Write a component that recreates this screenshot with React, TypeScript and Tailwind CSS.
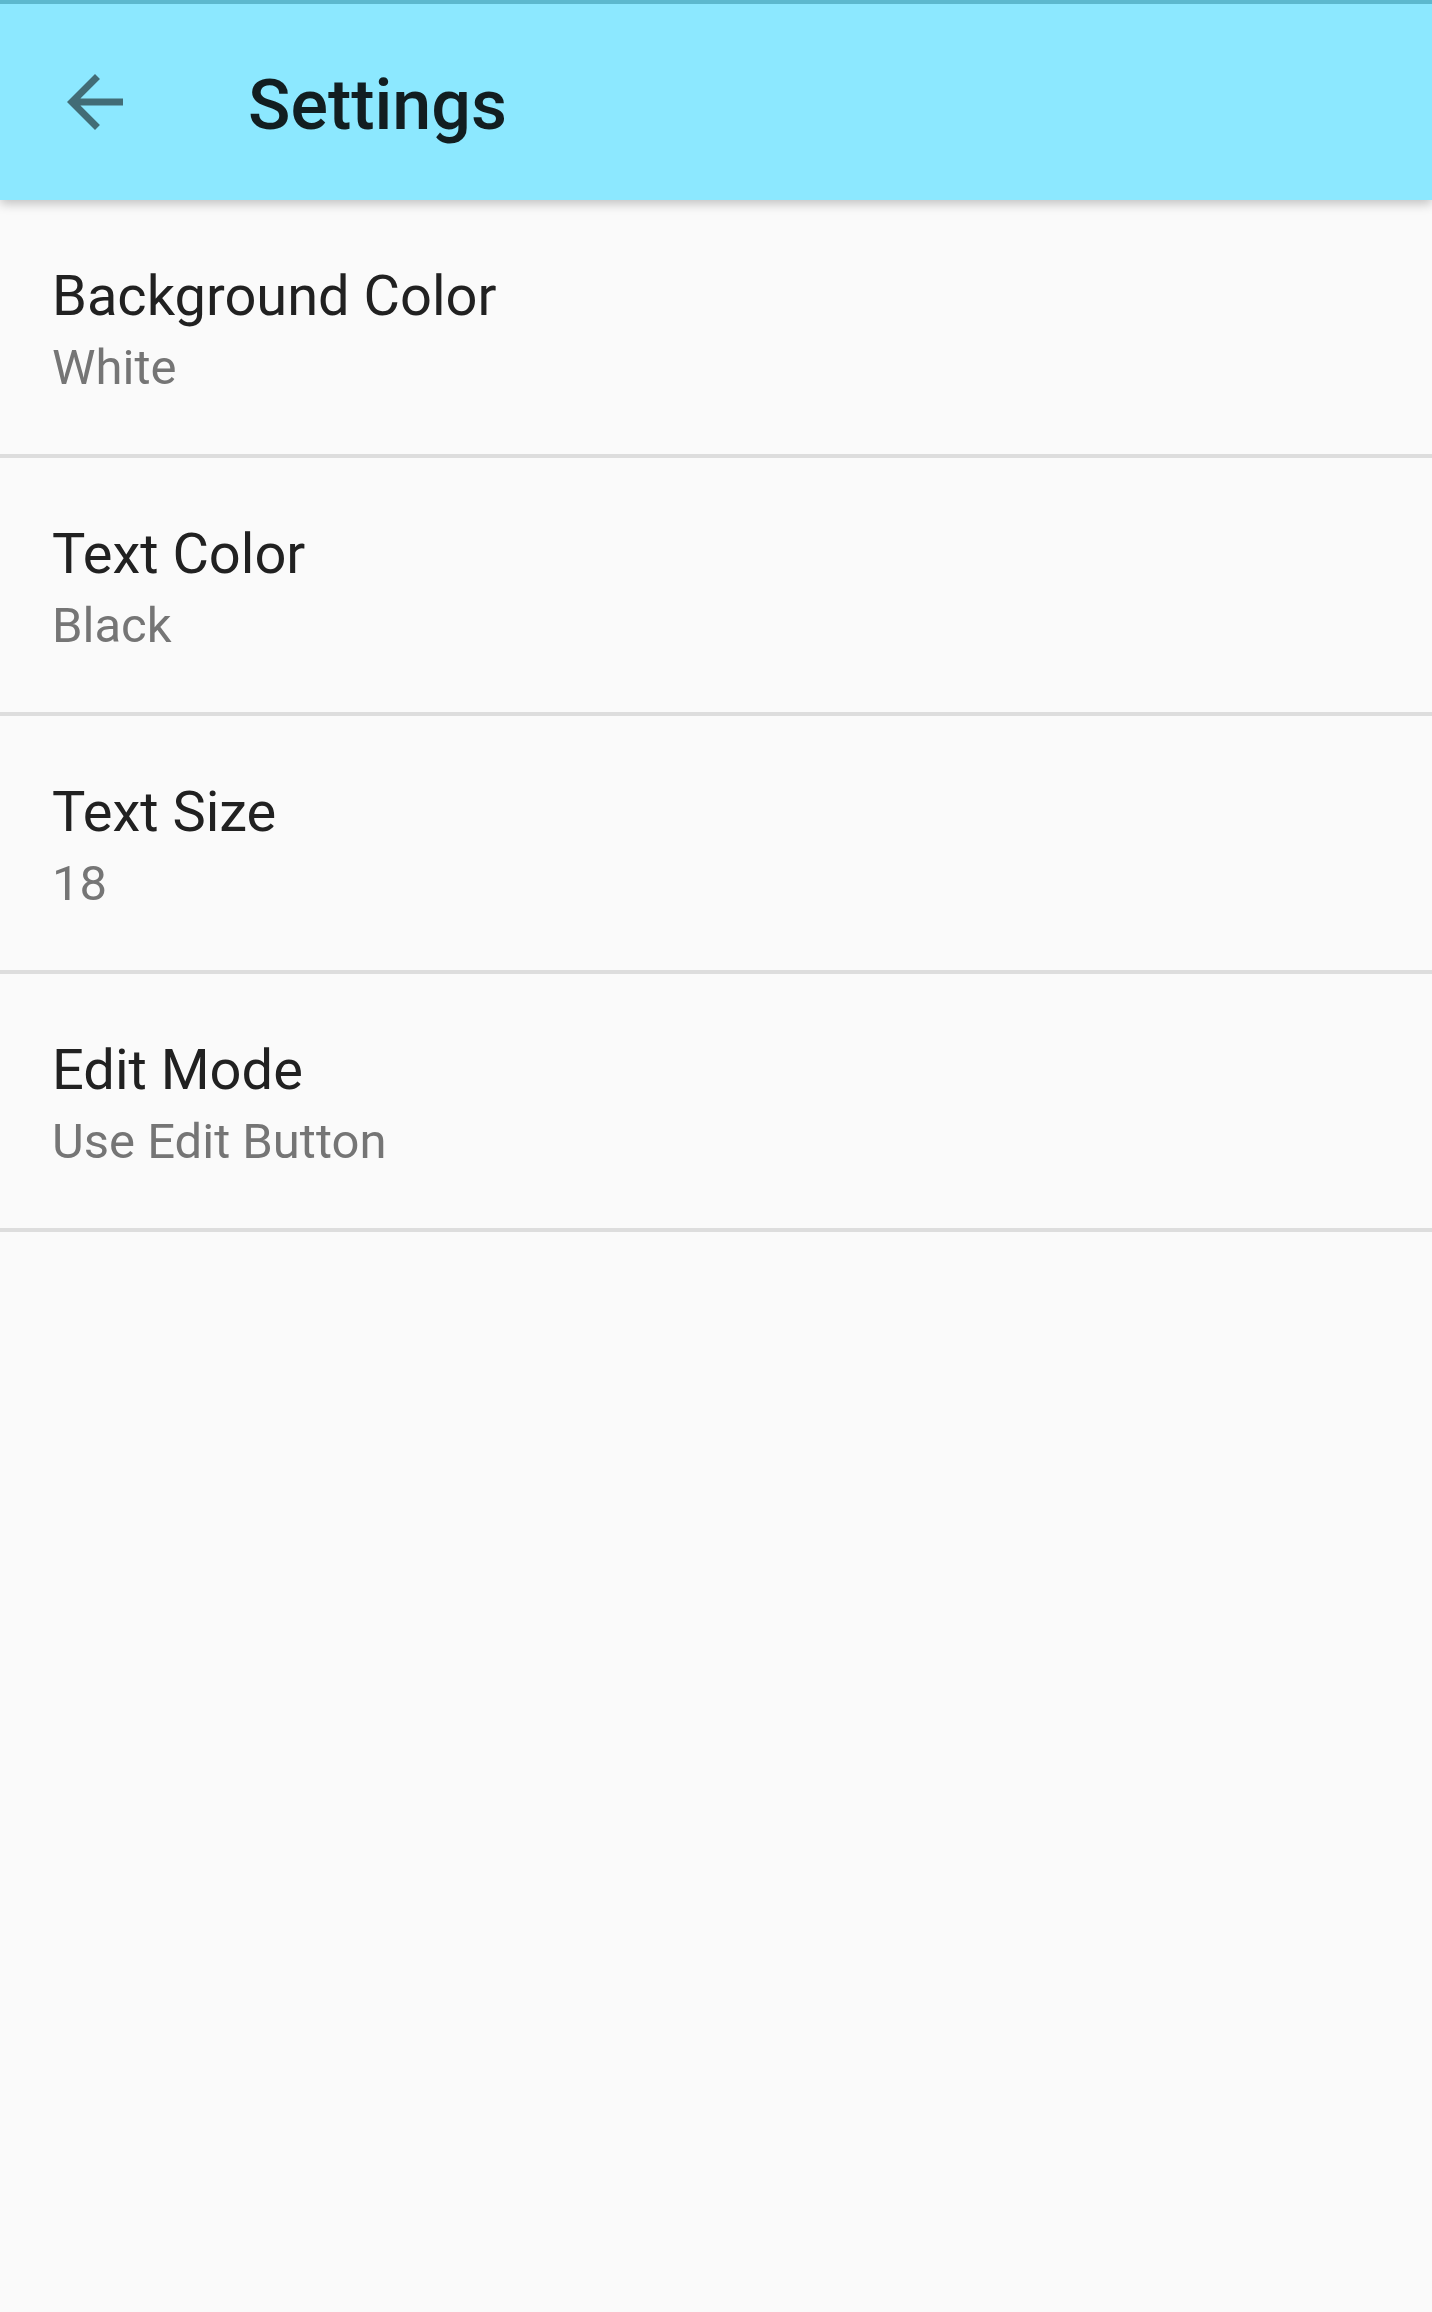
import React from 'react';

interface SettingItem {
  title: string;
  summary: string;
}

const items: SettingItem[] = [
  { title: 'Background Color', summary: 'White' },
  { title: 'Text Color', summary: 'Black' },
  { title: 'Text Size', summary: '18' },
  { title: 'Edit Mode', summary: 'Use Edit Button' },
];

const BackArrow = () => (
  <svg viewBox="0 0 24 24" className="w-[84px] h-[84px]" fill="#426c76">
    <path d="M20 11H7.83l5.59-5.59L12 4l-8 8 8 8 1.41-1.41L7.83 13H20v-2z" />
  </svg>
);

const SettingRow = ({ title, summary }: SettingItem) => (
  <div className="h-[258px] border-b-4 border-[#dddddd] pl-[52px] pt-[63px]">
    <div className="text-[56px] leading-[66px] text-[#212121]">{title}</div>
    <div className="mt-[10px] text-[49px] leading-[57px] text-[#757575]">{summary}</div>
  </div>
);

export default function App() {
  return (
    <div
      className="min-h-[2312px] w-full bg-[#fafafa]"
      style={{ fontFamily: 'Roboto, "Noto Sans", sans-serif' }}
    >
      <header className="relative z-10 h-[200px] border-t-4 border-[#5cb8ce] bg-[#8ce8ff] shadow-[0_4px_10px_rgba(0,0,0,0.22)] flex items-center pl-[53px]">
        <button className="shrink-0">
          <BackArrow />
        </button>
        <h1 className="ml-[111px] mt-[6px] text-[70px] leading-[82px] font-medium text-[#121e21]">
          Settings
        </h1>
      </header>
      <div>
        {items.map(item => (
          <SettingRow key={item.title} title={item.title} summary={item.summary} />
        ))}
      </div>
    </div>
  );
}
